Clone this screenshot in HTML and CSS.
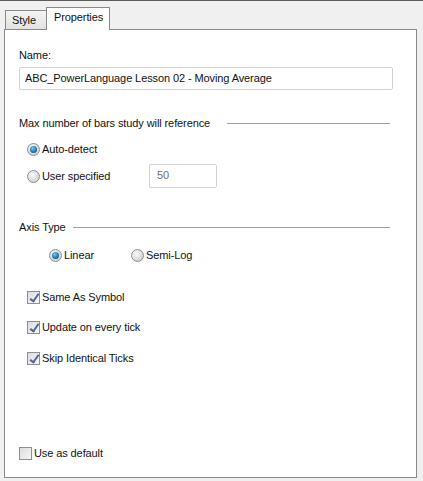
FILE: index.html
```html
<!DOCTYPE html>
<html lang="en">
<head>
    <meta charset="UTF-8">
    <title>Properties</title>
    <link rel="stylesheet" href="styles.css">
</head>
<body>
    <div class="tabs">
        <div class="tab">Style</div>
        <div class="tab active">Properties</div>
    </div>

    <div class="panel">
        <div class="label">Name:</div>
        <div class="textbox name">ABC_PowerLanguage Lesson 02 - Moving Average</div>

        <div class="group-title bars-title">
            <span>Max number of bars study will reference</span>
            <span class="rule bars-rule"></span>
        </div>
        <div class="row auto-row">
            <span class="radio checked"></span>
            <span>Auto-detect</span>
        </div>
        <div class="row user-row">
            <span class="radio"></span>
            <span class="user-text">User specified</span>
            <div class="textbox small">50</div>
        </div>

        <div class="group-title axis-title">
            <span>Axis Type</span>
            <span class="rule axis-rule"></span>
        </div>
        <div class="row axis-row">
            <span class="radio checked"></span>
            <span class="linear-text">Linear</span>
            <span class="radio"></span>
            <span>Semi-Log</span>
        </div>

        <div class="row check-row first">
            <span class="check on"></span>
            <span>Same As Symbol</span>
        </div>
        <div class="row check-row second">
            <span class="check on"></span>
            <span>Update on every tick</span>
        </div>
        <div class="row check-row third">
            <span class="check on"></span>
            <span>Skip Identical Ticks</span>
        </div>

        <div class="row default-row">
            <span class="check"></span>
            <span>Use as default</span>
        </div>
    </div>
</body>
</html>
```

FILE: styles.css
```css
* {
    margin: 0;
    padding: 0;
    box-sizing: border-box;
}

html {
    background-color: #f0f0f0;
}

body {
    font-family: Tahoma, "Liberation Sans", Arial, sans-serif;
    font-size: 11px;
    letter-spacing: -0.1px;
    color: #111;
    border-top: 1px solid #5c5c5c;
    width: 423px;
    height: 481px;
}

.tabs {
    display: flex;
    align-items: flex-end;
    padding-left: 5px;
    height: 28px;
}

.tab {
    height: 19px;
    line-height: 18px;
    padding: 0 6px 0 6px;
    border: 1px solid #898989;
    border-bottom: none;
    background: linear-gradient(#f3f3f3, #e2e2e2);
    width: 42px;
}

.tab.active {
    height: 23px;
    width: 64px;
    margin-left: -1px;
    margin-bottom: -1px;
    line-height: 19px;
    padding-left: 7px;
    background: #fff;
    position: relative;
    z-index: 1;
}

.panel {
    margin: 0 6px 0 4px;
    height: 449px;
    border: 1px solid #898989;
    background: #fff;
    padding: 18px 0 0 14px;
    display: flex;
    flex-direction: column;
}

.label,
.row,
.group-title {
    line-height: 14px;
}

.textbox {
    border: 1px solid #d2d2d2;
    border-radius: 2px;
    background: #fff;
}

.textbox.name {
    margin-top: 5px;
    width: 374px;
    height: 23px;
    line-height: 21px;
    padding-left: 5px;
}

.group-title {
    display: flex;
    align-items: center;
    width: 371px;
}

.rule {
    flex: 1;
    height: 1px;
    background: #a0a0a0;
}

.bars-title {
    margin-top: 26px;
}

.bars-rule {
    margin-left: 17px;
}

.axis-title {
    margin-top: 32px;
}

.axis-rule {
    margin-left: 7px;
}

.row {
    display: flex;
    align-items: center;
    padding-left: 8px;
}

.radio {
    width: 13px;
    height: 13px;
    border-radius: 50%;
    border: 1px solid #8f8f8f;
    background: radial-gradient(circle at 40% 35%, #fafafa, #d4d4d4 70%);
    margin-right: 2px;
    display: flex;
    align-items: center;
    justify-content: center;
}

.radio.checked::after {
    content: "";
    width: 7px;
    height: 7px;
    border-radius: 50%;
    background: radial-gradient(circle at 40% 35%, #7fc8f0, #1b6fa8 60%, #0d3d66);
}

.check {
    width: 13px;
    height: 13px;
    border: 1px solid #8f8f8f;
    background: linear-gradient(135deg, #dcdcdc, #f8f8f8);
    margin-right: 2px;
    position: relative;
}

.check.on::after {
    content: "";
    position: absolute;
    left: 4px;
    top: 0;
    width: 3px;
    height: 8px;
    border: solid #5163a3;
    border-width: 0 2px 2px 0;
    transform: rotate(35deg);
}

.auto-row {
    margin-top: 12px;
}

.user-row {
    margin-top: 8px;
    height: 24px;
}

.user-text {
    width: 107px;
}

.textbox.small {
    width: 68px;
    height: 24px;
    line-height: 20px;
    padding-left: 7px;
    color: #6d6d6d;
}

.axis-row {
    margin-top: 14px;
    padding-left: 30px;
}

.linear-text {
    width: 67px;
}

.check-row.first {
    margin-top: 28px;
}

.check-row.second {
    margin-top: 16px;
}

.check-row.third {
    margin-top: 17px;
}

.default-row {
    margin-top: auto;
    margin-bottom: 17px;
    padding-left: 0;
}
```
